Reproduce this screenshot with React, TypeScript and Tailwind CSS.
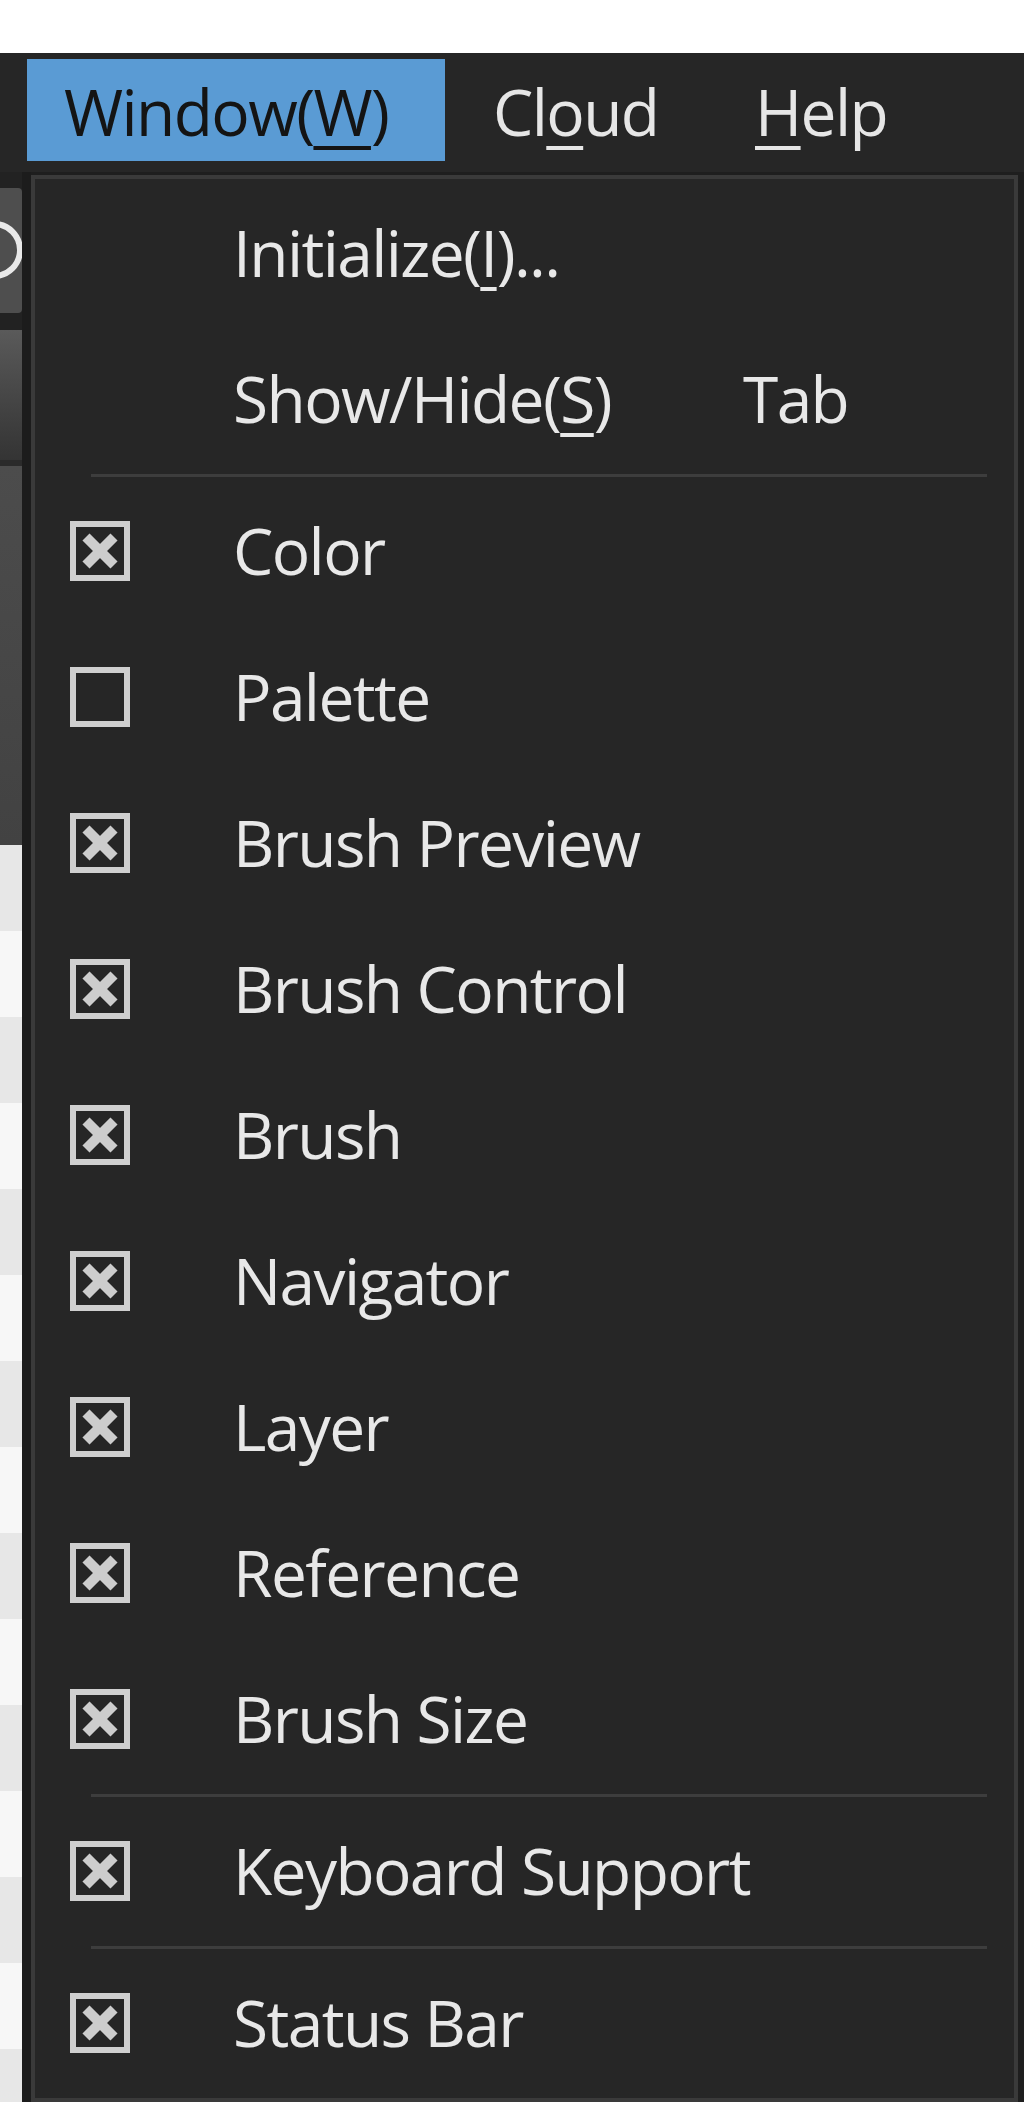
import { Fragment } from "react";

type Item =
  | { kind: "sep" }
  | { kind: "item"; label: React.ReactNode; checked?: boolean; shortcut?: string };

const FONT = "font-['Open_Sans',sans-serif]";

function Checkbox({ checked }: { checked: boolean }) {
  return (
    <svg width="60" height="60" viewBox="0 0 60 60">
      <rect x="3" y="3" width="54" height="54" fill="none" stroke="#cfcfcf" strokeWidth="6" />
      {checked && (
        <g stroke="#cdcdcd" strokeWidth="10">
          <line x1="16" y1="16" x2="44" y2="44" />
          <line x1="44" y1="16" x2="16" y2="44" />
        </g>
      )}
    </svg>
  );
}

function U({ children }: { children: React.ReactNode }) {
  return (
    <span className="underline decoration-[4px] underline-offset-[10px]">{children}</span>
  );
}

const items: Item[] = [
  { kind: "item", label: <>Initialize(<U>I</U>)...</> },
  { kind: "item", label: <>Show/Hide(<U>S</U>)</>, shortcut: "Tab" },
  { kind: "sep" },
  { kind: "item", label: "Color", checked: true },
  { kind: "item", label: "Palette", checked: false },
  { kind: "item", label: "Brush Preview", checked: true },
  { kind: "item", label: "Brush Control", checked: true },
  { kind: "item", label: "Brush", checked: true },
  { kind: "item", label: "Navigator", checked: true },
  { kind: "item", label: "Layer", checked: true },
  { kind: "item", label: "Reference", checked: true },
  { kind: "item", label: "Brush Size", checked: true },
  { kind: "sep" },
  { kind: "item", label: "Keyboard Support", checked: true },
  { kind: "sep" },
  { kind: "item", label: "Status Bar", checked: true },
];

function LeftStrip() {
  const stripes = Array.from({ length: 15 }, (_, i) => i);
  return (
    <div className="flex w-[22px] flex-col bg-[#222]">
      <div className="h-[16px]" />
      <div className="h-[125px] overflow-hidden rounded-r-[4px] bg-[#4e4e4e]">
        <svg width="22" height="125" viewBox="0 0 22 125">
          <circle cx="-6" cy="62" r="26" fill="none" stroke="#e8e8e8" strokeWidth="6" />
        </svg>
      </div>
      <div className="h-[17px]" />
      <div className="h-[130px] bg-gradient-to-b from-[#5a5a5a] to-[#343434]" />
      <div className="h-[6px] bg-[#2a2a2a]" />
      <div className="h-[379px] bg-gradient-to-b from-[#4c4c4c] to-[#424242]" />
      {stripes.map((i) => (
        <div
          key={i}
          className={i % 2 === 0 ? "h-[86px] shrink-0 bg-[#e7e7e7]" : "h-[86px] shrink-0 bg-[#f7f7f7]"}
        />
      ))}
    </div>
  );
}

export default function App() {
  return (
    <div className={`flex h-[2102px] w-[1024px] flex-col overflow-hidden bg-white ${FONT}`}>
      <div className="h-[53px] shrink-0 bg-white" />

      {/* menu bar */}
      <div className="flex h-[119px] shrink-0 items-start bg-[#262626] text-[64px] leading-none tracking-[-0.025em]">
        <div className="ml-[27px] mt-[6px] flex h-[102px] w-[418px] items-center bg-[#5a9bd4] pl-[37px] pt-[4px] text-[#141414]">
          Window(<U>W</U>)
        </div>
        <div className="mt-[6px] flex h-[102px] w-[310px] items-center pl-[48px] pt-[4px] text-[#e6e6e6]">
          Cl<U>o</U>ud
        </div>
        <div className="mt-[6px] flex h-[102px] items-center pt-[4px] text-[#e6e6e6]">
          <U>H</U>elp
        </div>
      </div>

      <div className="flex flex-1 bg-[#1e1e1e]">
        <LeftStrip />
        <div className="w-[9px] bg-[#1c1c1c]" />

        {/* dropdown */}
        <div className="mt-[3px] h-[1927px] w-[987px] border-4 border-[#3a3a3a] bg-[#262626] pt-[1px] text-[64px] leading-none tracking-[-0.025em] text-[#e8e8e8]">
          {items.map((it, idx) => (
            <Fragment key={idx}>
              {it.kind === "sep" ? (
                <div className="flex h-[6px] items-center pl-[56px] pr-[27px]">
                  <div className="h-[3px] w-full bg-[#3d3d3d]" />
                </div>
              ) : (
                <div className="flex h-[146px] items-center">
                  <div className="flex w-[198px] items-center pl-[35px]">
                    {it.checked !== undefined && <Checkbox checked={it.checked} />}
                  </div>
                  <div className="w-[510px] whitespace-nowrap">{it.label}</div>
                  {it.shortcut && <div>{it.shortcut}</div>}
                </div>
              )}
            </Fragment>
          ))}
        </div>
      </div>
    </div>
  );
}
